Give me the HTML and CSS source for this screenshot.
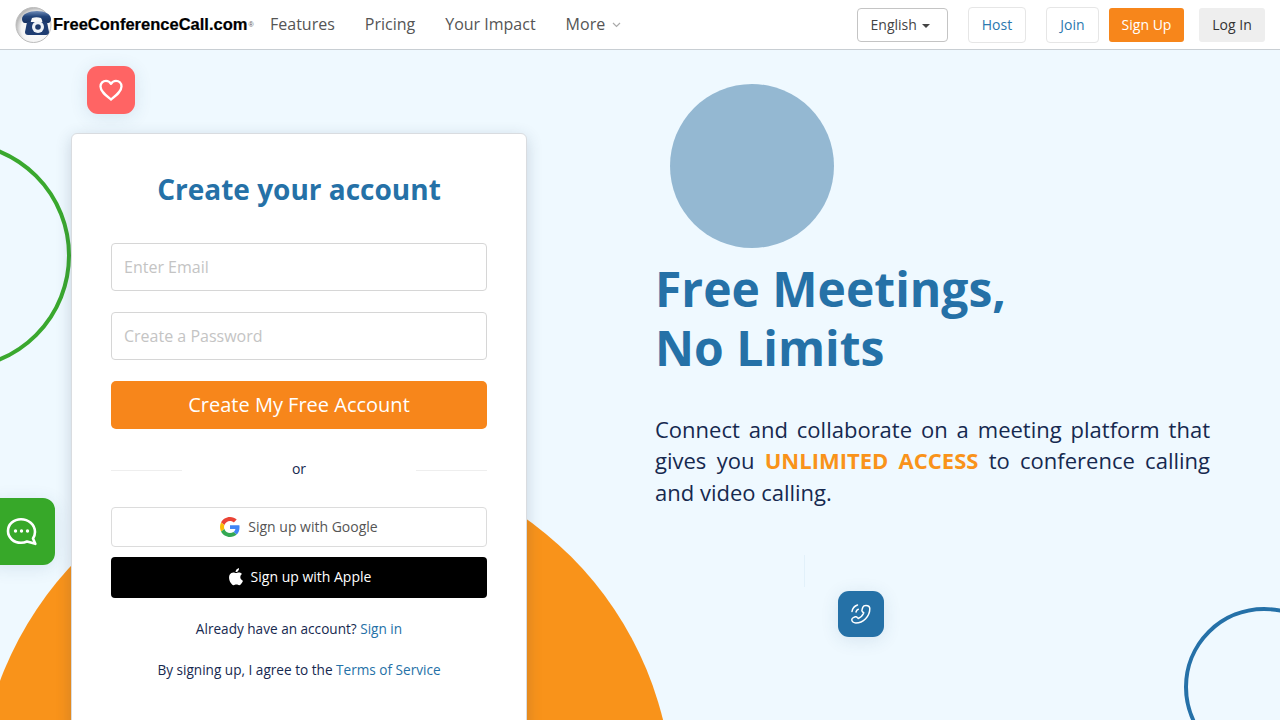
FILE: index.html
```html
<!DOCTYPE html>
<html lang="en">

<head>
  <meta charset="UTF-8">
  <meta name="viewport" content="width=device-width, initial-scale=1.0">
  <title>Create your account</title>
  <link rel="stylesheet" href="styles.css">
</head>

<body>
  <header class="top-bar">
    <a class="logo" href="#">
      <svg class="logo-ball" width="38" height="38" viewBox="0 0 38 38">
        <defs>
          <radialGradient id="ball" cx="0.6" cy="0.6" r="0.6">
            <stop offset="0" stop-color="#ffffff"></stop>
            <stop offset="0.75" stop-color="#f4f4f4"></stop>
            <stop offset="1" stop-color="#b9b9b9"></stop>
          </radialGradient>
          <linearGradient id="phone" x1="0" y1="0" x2="0" y2="1">
            <stop offset="0" stop-color="#6f8cb8"></stop>
            <stop offset="0.45" stop-color="#24467c"></stop>
            <stop offset="1" stop-color="#16305e"></stop>
          </linearGradient>
        </defs>
        <circle cx="18.500" cy="19" r="17.500" fill="url(#ball)" stroke="#bdbdbd" stroke-width="1"></circle>
        <path d="M7 13c0-5 7-8 15-8s14 3 14 8c0 2-1 4-3 4h-4c-1 0-2-1-2-3l-1-2c-3-1-6-1-9 0l-1 3c0 1-1 2-3 2h-3c-2 0-3-2-3-4z" fill="url(#phone)"></path>
        <path d="M12 16h20l2 10c0 2-1 3-3 3H13c-2 0-3-1-3-3z" fill="#1f3d72"></path>
        <circle cx="23" cy="21" r="6" fill="#eef2f7"></circle>
        <circle cx="23" cy="21" r="2.800" fill="#1f3a6b"></circle>
      </svg>
      <span class="logo-word">FreeConferenceCall.com</span><span class="logo-reg">®</span>
    </a>
    <nav class="main-nav">
      <a href="#">Features</a>
      <a href="#">Pricing</a>
      <a href="#">Your Impact</a>
      <a href="#">More
        <svg class="more-arrow" width="9" height="6" viewBox="0 0 9 6"><path d="M1 1l3.500 3.500L8 1" fill="none" stroke="#aaaaaa" stroke-width="1.200"></path></svg>
      </a>
    </nav>
    <div class="top-actions">
      <button type="button" class="btn-lang">English <span class="caret"></span></button>
      <a class="btn-outline btn-host" href="#">Host</a>
      <a class="btn-outline btn-join" href="#">Join</a>
      <a class="btn-signup" href="#">Sign Up</a>
      <a class="btn-login" href="#">Log In</a>
    </div>
  </header>

  <main class="hero">
    <!-- background shapes -->
    <div class="shape-orange"></div>
    <div class="shape-green"></div>
    <div class="shape-blue"></div>
    <div class="shape-line"></div>

    <div class="tile tile-heart">
      <svg width="26" height="24" viewBox="0 0 26 24"><path d="M13 21.500C8 17.500 2.500 13.500 2.500 8.500 2.500 5 5 2.800 8 2.800c2 0 3.800 1 5 3 1.200-2 3-3 5-3 3 0 5.500 2.200 5.500 5.700 0 5-5.500 9-10.500 13z" fill="none" stroke="#fff" stroke-width="2.300" stroke-linejoin="round"></path></svg>
    </div>
    <div class="tile tile-chat">
      <svg width="32" height="30" viewBox="0 0 32 30"><path d="M15 2.200C7.800 2.200 2 7.300 2 14s5.800 11.800 13 11.800c2.200 0 4.300-.5 6-1.300l8.300 2.300-2.300-5.300c1.300-2 2-4.200 2-6.500C29 7.300 22.200 2.200 15 2.200z" fill="none" stroke="#fff" stroke-width="2.600" stroke-linejoin="round"></path><circle cx="9.500" cy="14" r="1.700" fill="#fff"></circle><circle cx="15.500" cy="14" r="1.700" fill="#fff"></circle><circle cx="21.500" cy="14" r="1.700" fill="#fff"></circle></svg>
    </div>
    <div class="tile tile-phone">
      <svg width="24" height="24" viewBox="0 0 24 24" fill="none" stroke="#fff" stroke-width="1.500" stroke-linecap="round" stroke-linejoin="round"><path d="M17 3.500c2 0 3.800 1.300 3.800 3.300 0 7.500-6.500 14.200-14 14.200-2.200 0-4-1.500-4-3.200 0-1 .6-1.800 1.500-2.200l2-.8c.8-.3 1.500 0 2 .6l1 1.100c2.500-1 4.500-3.200 5.500-5.700l-1.200-1c-.7-.5-.9-1.300-.6-2l.8-2.500c.4-1 1.300-1.800 3.200-1.800z"></path><path d="M3 9.500C3.500 6.500 5.500 4 8.500 3"></path><path d="M7 10c.3-1.300 1-2.300 2.300-2.800"></path></svg>
    </div>

    <section class="signup-card">
      <h2 class="card-title">Create your account</h2>
      <form class="signup-form">
        <input type="text" class="field" placeholder="Enter Email">
        <input type="password" class="field" placeholder="Create a Password">
        <button type="button" class="btn-create">Create My Free Account</button>
      </form>
      <div class="divider">
        <span class="divider-line"></span>
        <span class="divider-text">or</span>
        <span class="divider-line"></span>
      </div>
      <button type="button" class="btn-social btn-google">
        <svg width="20" height="20" viewBox="0 0 48 48">
          <path fill="#EA4335" d="M24 9.500c3.500 0 6.700 1.200 9.200 3.600l6.900-6.900C35.900 2.400 30.500 0 24 0 14.600 0 6.500 5.400 2.600 13.200l8 6.200C12.500 13.700 17.800 9.500 24 9.500z"></path>
          <path fill="#4285F4" d="M46.900 24.500c0-1.600-.1-3.100-.4-4.500H24v9h12.900c-.6 3-2.200 5.500-4.700 7.200l7.700 6c4.500-4.200 7-10.300 7-17.700z"></path>
          <path fill="#FBBC05" d="M10.500 28.600c-.5-1.400-.8-3-.8-4.600s.3-3.200.8-4.600l-8-6.200C.9 16.500 0 20.100 0 24s.9 7.500 2.600 10.800l7.900-6.200z"></path>
          <path fill="#34A853" d="M24 48c6.500 0 11.900-2.100 15.900-5.800l-7.700-6c-2.200 1.500-4.900 2.300-8.200 2.300-6.200 0-11.500-4.200-13.400-9.900l-8 6.200C6.500 42.600 14.600 48 24 48z"></path>
        </svg>
        Sign up with Google
      </button>
      <button type="button" class="btn-social btn-apple">
        <svg width="16" height="19" viewBox="0 0 16 19"><path fill="#fff" d="M13.300 10c0-2 1.600-3 1.700-3-1-1.400-2.400-1.600-2.900-1.600-1.300-.1-2.400.7-3.100.7-.6 0-1.600-.7-2.700-.7C4.900 5.400 3.600 6.200 2.800 7.500c-1.500 2.600-.4 6.500 1.100 8.600.7 1 1.600 2.200 2.700 2.100 1.100 0 1.500-.7 2.800-.7s1.700.7 2.800.7c1.200 0 1.900-1 2.600-2.100.8-1.200 1.200-2.400 1.200-2.400-.1 0-2.700-1-2.700-3.700zM11.100 3.900c.6-.7 1-1.700.9-2.700-.9 0-1.900.6-2.500 1.300-.5.600-1 1.600-.9 2.600 1 .1 2-.5 2.500-1.200z"></path></svg>
        Sign up with Apple
      </button>
      <p class="card-note">Already have an account? <a href="#">Sign in</a></p>
      <p class="card-note">By signing up, I agree to the <a href="#">Terms of Service</a></p>
    </section>

    <section class="intro">
      <div class="intro-circle"></div>
      <h1 class="intro-title">Free Meetings,<br>No Limits</h1>
      <p class="intro-text">Connect and collaborate on a meeting platform that gives you <strong>UNLIMITED ACCESS</strong> to conference calling and video calling.</p>
    </section>
  </main>
</body>

</html>
```

FILE: styles.css
```css
* {
  box-sizing: border-box;
}

html,
body {
  margin: 0;
  padding: 0;
  height: 720px;
  overflow: hidden;
}

body {
  font-family: "Open Sans", sans-serif;
  color: #16294f;
  background-color: #eff9ff;
}

a {
  text-decoration: none;
}

.top-bar {
  display: flex;
  align-items: center;
  height: 50px;
  padding: 0 15px;
  background-color: #fff;
  border-bottom: 1px solid #c8ced3;
}

.logo {
  display: flex;
  align-items: center;
  flex-shrink: 0;
  width: 240px;
  color: #000;
}

.logo-ball {
  flex-shrink: 0;
}

.logo-word {
  font-family: "Liberation Sans", Arial, sans-serif;
  font-size: 16.500px;
  font-weight: 700;
  -webkit-text-stroke: 0.2px #000;
  white-space: nowrap;
}

.logo-reg {
  font-family: "Liberation Sans", Arial, sans-serif;
  font-size: 7px;
  color: #555;
  margin-left: 1px;
}

.main-nav {
  display: flex;
  gap: 30px;
  margin-left: 15px;
  margin-bottom: 2px;
}

.main-nav a {
  font-size: 16px;
  color: #555;
}

.more-arrow {
  margin-left: 3px;
  vertical-align: 2px;
}

.top-actions {
  display: flex;
  align-items: center;
  margin-left: auto;
  font-size: 14px;
}

.btn-lang {
  width: 91px;
  height: 34px;
  padding: 0 4px 0 0;
  font-family: inherit;
  font-size: 14px;
  color: #444;
  background-color: #fff;
  border: 1px solid #c4c4c4;
  border-radius: 4px;
}

.caret {
  display: inline-block;
  margin-left: 2px;
  vertical-align: 2px;
  border-top: 4px solid #444;
  border-left: 4px solid transparent;
  border-right: 4px solid transparent;
}

.btn-outline {
  display: flex;
  align-items: center;
  justify-content: center;
  height: 36px;
  color: #2b78ae;
  background-color: #fff;
  border: 1px solid #e6e6e6;
  border-radius: 4px;
}

.btn-host {
  width: 58px;
  margin-left: 20px;
}

.btn-join {
  width: 53px;
  margin-left: 20px;
}

.btn-signup {
  display: flex;
  align-items: center;
  justify-content: center;
  width: 75px;
  height: 34px;
  margin-left: 10px;
  color: #fff;
  background-color: #f7861b;
  border-radius: 3px;
}

.btn-login {
  display: flex;
  align-items: center;
  justify-content: center;
  width: 66px;
  height: 34px;
  margin-left: 15px;
  color: #333;
  background-color: #eee;
  border-radius: 3px;
}

.hero {
  position: relative;
  display: flex;
  align-items: flex-start;
  height: 670px;
  padding-left: 71px;
  overflow: hidden;
}

.shape-orange {
  position: absolute;
  left: -22px;
  top: 405px;
  width: 695px;
  height: 695px;
  border-radius: 50%;
  background-color: #f9931a;
}

.shape-green {
  position: absolute;
  left: -158px;
  top: 91px;
  width: 229px;
  height: 229px;
  border: 4px solid #3aa82e;
  border-radius: 50%;
}

.shape-blue {
  position: absolute;
  left: 1184px;
  top: 557px;
  width: 160px;
  height: 160px;
  border: 4px solid #2571a8;
  border-radius: 50%;
}

.shape-line {
  position: absolute;
  left: 804px;
  top: 505px;
  width: 1px;
  height: 32px;
  background-color: #e2f1fa;
}

.tile {
  position: absolute;
  z-index: 2;
  display: flex;
  align-items: center;
  justify-content: center;
  box-shadow: 0 3px 18px rgba(40, 80, 120, 0.12);
}

.tile-heart {
  left: 87px;
  top: 16px;
  width: 48px;
  height: 48px;
  background-color: #ff6464;
  border-radius: 11px;
}

.tile-chat {
  left: -12px;
  top: 448px;
  width: 67px;
  height: 67px;
  background-color: #37a829;
  border-radius: 12px;
}

.tile-phone {
  left: 838px;
  top: 541px;
  width: 46px;
  height: 46px;
  background-color: #2571a7;
  border-radius: 11px;
}

.signup-card {
  position: relative;
  z-index: 1;
  flex-shrink: 0;
  width: 456px;
  height: 640px;
  margin-top: 83px;
  padding: 36px 39px 0;
  background-color: #fff;
  border: 1px solid #d9dce0;
  border-radius: 6px;
  box-shadow: 0 4px 16px rgba(40, 60, 90, 0.2);
}

.card-title {
  margin: 0 0 33px;
  font-size: 28px;
  line-height: 39px;
  padding-bottom: 1px;
  font-weight: 700;
  text-align: center;
  color: #2571a7;
}

.signup-form {
  display: grid;
  row-gap: 21px;
}

.field {
  width: 100%;
  height: 48px;
  padding: 0 12px;
  font-family: inherit;
  font-size: 16px;
  background-color: #fff;
  border: 1px solid #d6d6d6;
  border-radius: 4px;
}

.field::placeholder {
  color: #c4c4c4;
}

.btn-create {
  height: 48px;
  padding-bottom: 3px;
  font-family: inherit;
  font-size: 20px;
  color: #fff;
  background-color: #f7861b;
  border-width: 0;
  border-radius: 5px;
}

.divider {
  display: flex;
  align-items: center;
  height: 20px;
  margin: 30px 0 28px;
}

.divider-line {
  flex: 0 0 71px;
  height: 1px;
  margin-top: 3px;
  background-color: #eeeeee;
}

.divider-text {
  flex: 1;
  margin-bottom: 2px;
  font-size: 14px;
  text-align: center;
}

.btn-social {
  display: flex;
  align-items: center;
  justify-content: center;
  gap: 8px;
  width: 100%;
  padding-bottom: 2px;
  font-family: inherit;
  font-size: 14px;
}

.btn-google {
  height: 40px;
  color: #555;
  background-color: #fff;
  border: 1px solid #dcdcdc;
  border-radius: 4px;
}

.btn-apple {
  height: 41px;
  margin-top: 10px;
  padding-bottom: 4px;
  color: #fff;
  background-color: #000;
  border-width: 0;
  border-radius: 4px;
}

.card-note {
  margin: 21px 0 0;
  font-size: 13.600px;
  line-height: 20px;
  text-align: center;
}

.card-note a {
  color: #2571a7;
}

.intro {
  position: relative;
  z-index: 1;
  width: 555px;
  margin-left: 128px;
  padding-top: 34px;
}

.intro-circle {
  width: 164px;
  height: 164px;
  margin-left: 15px;
  background-color: #94b8d2;
  border-radius: 50%;
}

.intro-title {
  margin: 11px 0 0;
  font-size: 48px;
  line-height: 59px;
  font-weight: 700;
  color: #2571a7;
}

.intro-text {
  margin: 36.500px 0 0;
  font-size: 22px;
  line-height: 31.500px;
  text-align: justify;
}

.intro-text strong {
  color: #f9931a;
}
```
